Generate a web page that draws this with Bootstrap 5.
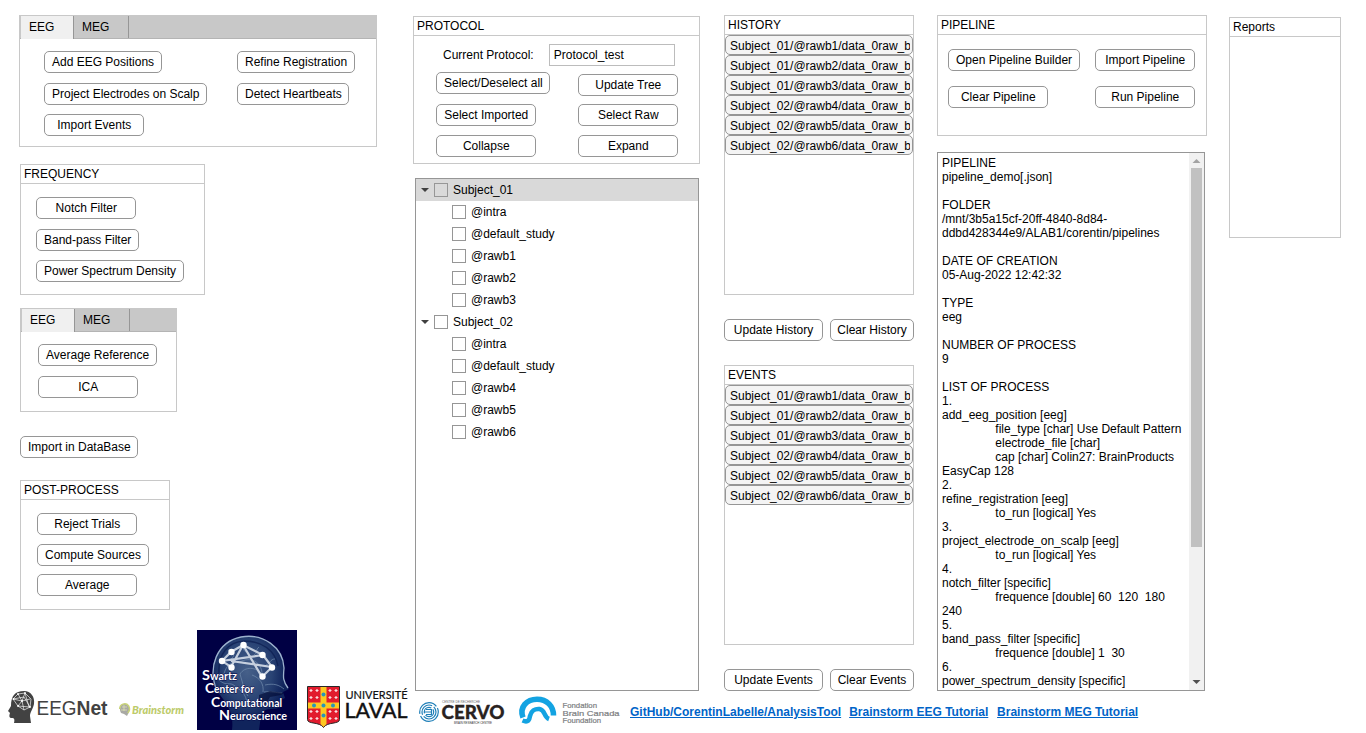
<!DOCTYPE html>
<html lang="en">
<head>
<meta charset="utf-8">
<title>EEGNet Analysis Tool</title>
<link rel="stylesheet" href="https://cdn.jsdelivr.net/npm/bootstrap@5.3.0/dist/css/bootstrap.min.css">
<script src="https://cdn.jsdelivr.net/npm/bootstrap@5.3.0/dist/js/bootstrap.bundle.min.js"></script>
<style>
body{font-family:"Liberation Sans",Arial,sans-serif;font-size:12px;line-height:14px;color:#000;background:#fff;width:1366px;height:733px;overflow:hidden}
.left-side{width:413px;padding:15px 0 0 20px}
.right-side{width:953px}
.columns-area{height:691px}
.panel{border:1px solid #c8c8c8;background:#fff}
.panel-title{height:19px;line-height:19px;padding-left:3px;border-bottom:1px solid #c8c8c8}
.btn-tool{--bs-btn-padding-x:7px;--bs-btn-padding-y:0;--bs-btn-font-size:12px;--bs-btn-line-height:20px;--bs-btn-color:#000;--bs-btn-bg:#fff;--bs-btn-border-color:#969696;--bs-btn-border-radius:5px;--bs-btn-hover-bg:#f0f0f0;--bs-btn-hover-color:#000;--bs-btn-hover-border-color:#777;padding-right:6.500px;min-width:100px;height:22px;white-space:nowrap}
.tab-strip{--bs-nav-link-padding-x:8px;--bs-nav-link-padding-y:0;--bs-nav-link-font-weight:400;background:#c8c8c8;border-bottom:1px solid #b4b4b4;height:23px;padding-left:1px}
.tab-strip .nav-link{height:22px;line-height:22px;color:#000;font-size:12px;border:0;border-right:1px solid #969696;border-radius:0;background:none}
.tab-strip .nav-link.active{background:#f0f0f0;height:23px;width:53px}
.tab-strip .nav-link:not(.active){width:55px}
.pre-panel{width:358px;height:132px;margin-left:-1px}
.pre-grid{display:grid;grid-template-columns:193px auto;grid-template-rows:22px 22px 22px;row-gap:10px;padding:12px 0 0 24px;justify-items:start;justify-content:start}
.pre-grid .third{margin-top:-1px}
.freq-panel{width:185px;height:131px;margin-top:17px}
.freq-list{padding:13px 0 0 15px}
.ref-panel{width:157px;height:104px;margin-top:13px}
.ref-list{padding:12px 0 0 17px;gap:10px}
.import-btn{margin-top:24px}
.post-panel{width:150px;height:130px;margin-top:22px}
.post-list{padding:13px 0 0 16px}
.gap-8{margin-top:8px}
.gap-9{margin-top:9px}
.gap-10{margin-top:10px}
.drop-2{margin-top:2px}
.logos-left{margin:20px 0 0 -20px;height:103px}
.protocol-col{width:287px;padding-top:16px}
.protocol-panel{height:148px}
.protocol-row{padding:8px 0 0 29px}
.protocol-row .form-control{width:126px;height:22px;margin-left:15px;border:1px solid #bcbcbc;border-radius:0;padding:0 4px;font-size:12px;line-height:20px;color:#000}
.protocol-grid{display:grid;grid-template-columns:142px auto;justify-content:start;justify-items:start;padding:6px 0 0 22px}
.tree-box{border:1px solid #969696;width:284px;height:513px;margin:14px 0 0 2px}
.tree-row{height:22px;padding-left:5px}
.tree-row.chosen{background:#d9d9d9}
.tree-row.leaf{padding-left:36px}
.tree-row .form-check-input{width:14px;height:14px;margin:0 5px 0 5px;border:1px solid #969696;border-radius:0;background-color:transparent}
.tree-row.leaf .form-check-input{margin-left:0}
.history-col{width:190px;margin-left:24px;padding-top:15px}
.list-panel{height:280px}
.entry{height:20px;line-height:20px;padding:0 2px 0 4px;border:1px solid #969696;border-radius:5px;background:#f4f4f4;overflow:hidden;white-space:nowrap}
.entry span{display:block;overflow:hidden}
.pair{display:grid;grid-template-columns:99px 84px;gap:7px;margin-top:24px}
.pair .btn-tool{min-width:0;padding:0}
.events-panel{margin-top:24px}
.pipeline-col{width:270px;margin-left:23px;padding-top:15px}
.pipeline-panel{height:121px}
.pipeline-grid{display:grid;grid-template-columns:147px auto;row-gap:15px;justify-content:start;justify-items:start;padding:14px 0 0 10px}
.summary-box{border:1px solid #969696;width:268px;height:539px;margin-top:16px}
.summary-text{width:251px;padding:3px 0 0 4px;margin:0;font:12px/14px "Liberation Sans",Arial,sans-serif;tab-size:16;overflow:hidden}
.scroll-track{width:15px;background:#f1f1f1}
.scroll-thumb{width:11px;height:379px;background:#c1c1c1}
.reports-panel{width:112px;height:221px;margin:17px 0 0 22px}
.footer-links{height:42px}
.footer-links a{color:#0064c8;font-weight:700;line-height:14px;margin-right:8px;margin-top:14px}
.footer-links a:last-child{margin-left:.8px}
</style>
</head>
<body>
<div class="d-flex">
  <section class="left-side d-flex flex-column align-items-start flex-shrink-0">
    <div class="panel pre-panel">
      <nav class="nav tab-strip"><a class="nav-link active" href="#">EEG</a><a class="nav-link" href="#">MEG</a></nav>
      <div class="pre-grid">
        <button class="btn btn-tool">Add EEG Positions</button><button class="btn btn-tool">Refine Registration</button>
        <button class="btn btn-tool">Project Electrodes on Scalp</button><button class="btn btn-tool">Detect Heartbeats</button>
        <button class="btn btn-tool third">Import Events</button>
      </div>
    </div>
    <div class="panel freq-panel">
      <div class="panel-title">FREQUENCY</div>
      <div class="freq-list d-flex flex-column align-items-start">
        <button class="btn btn-tool">Notch Filter</button>
        <button class="btn btn-tool gap-10">Band-pass Filter</button>
        <button class="btn btn-tool gap-9">Power Spectrum Density</button>
      </div>
    </div>
    <div class="panel ref-panel">
      <nav class="nav tab-strip"><a class="nav-link active" href="#">EEG</a><a class="nav-link" href="#">MEG</a></nav>
      <div class="ref-list d-flex flex-column align-items-start">
        <button class="btn btn-tool">Average Reference</button>
        <button class="btn btn-tool">ICA</button>
      </div>
    </div>
    <button class="btn btn-tool import-btn">Import in DataBase</button>
    <div class="panel post-panel">
      <div class="panel-title">POST-PROCESS</div>
      <div class="post-list d-flex flex-column align-items-start">
        <button class="btn btn-tool">Reject Trials</button>
        <button class="btn btn-tool gap-9">Compute Sources</button>
        <button class="btn btn-tool gap-8">Average</button>
      </div>
    </div>
    <div class="logos-left d-flex flex-shrink-0">
      <!-- EEGNet -->
      <svg width="116" height="103" viewBox="0 630 116 103">
        <path d="M14 723c1-4 0-5-2-5-3 0-3-2-2-5l-2-2 3-5c0-10 4-15 13-15 7 0 11 6 10 13-1 5-4 8-4 12l1 7z" fill="#424242"/>
        <path d="M13 699l5-5 7-1 6 6-1 8-6 3-6-4-5-7 9 2 8-2M18 694l4 7 3-8 4 14M22 701l-4 5M22 701l2 9M13 699l11-2 6 10M18 706l12 1" fill="none" stroke="#fff" stroke-width=".65"/>
        <g fill="#fff"><circle cx="18" cy="694" r=".9"/><circle cx="25" cy="693" r=".9"/><circle cx="22" cy="701" r="1"/><circle cx="30" cy="707" r=".9"/><circle cx="18" cy="706" r=".9"/><circle cx="13.500" cy="699" r=".9"/></g>
        <text x="36.500" y="715" font-size="20" fill="#424242" textLength="40" lengthAdjust="spacingAndGlyphs">EEG</text>
        <text x="76.500" y="715" font-size="20" font-weight="700" fill="#424242" textLength="31" lengthAdjust="spacingAndGlyphs">Net</text>
      </svg>
      <!-- Brainstorm -->
      <svg width="81" height="103" viewBox="116 630 81 103">
        <path d="M121 713c-3-6 1-10 5-9 4 1 4 5 3 8l-2 4-3-2z" fill="#a9a9a4"/>
        <path d="M119.700 709c0-5 6-7 9-3 1 2 1 5-1 7" fill="none" stroke="#c8d377" stroke-width="1.500"/>
        <path d="M122 707h5M121 710h6M124 705v6" stroke="#dde2b2" stroke-width=".8"/>
        <text x="132" y="714" font-family="Lato" font-weight="900" font-style="italic" font-size="10.500" fill="#bdcb6a" textLength="52" lengthAdjust="spacingAndGlyphs">Brainstorm</text>
      </svg>
      <!-- Swartz Center for Computational Neuroscience -->
      <svg width="100" height="100" viewBox="0 0 100 100">
        <defs><radialGradient id="brain" cx=".45" cy=".38"><stop stop-color="#466089"/><stop offset=".65" stop-color="#294374"/><stop offset="1" stop-color="#10245c"/></radialGradient></defs>
        <path d="M0 0h100v100H0z" fill="#000044"/>
        <path d="M20 61C10 37 19 13 43 7c22-5 43 10 44 31-1 11 0 14 5 21l-6 3 2 6-4 2v7c-8 4-16-1-20 8l-2 15H35c2-17-4-25-15-39z" fill="url(#brain)"/>
        <path d="M20 61C10 37 20 12 44 7c22-4 42 10 43 31-1 10-1 13 4 20" fill="none" stroke="#9cb2ce" stroke-width="1.300"/>
        <path d="M22 43c-1-19 9-31 25-32 18 0 31 9 34 25" fill="none" stroke="#0b1c50" stroke-width="1.500" opacity=".7"/>
        <path d="M27 44c2-9 8-13 16-12 10-6 22 0 22 12-6-7-17-8-22 0 3 10 4 16 8 22M31 20c7 2 7 6 3 9m10-15c4 4 1 6 5 8m13-5c-4 3-1 6-5 8m21 4c-5 0-5 5-9 6M22 50c8 7 10 1 16 6s11 7 12 18M55 45c8 3 12 9 11 17M68 55c9-2 14 0 19 4M67 62c8-1 12 1 18 1" fill="none" stroke="#7892b2" stroke-width="1" opacity=".65"/>
        <path d="M62 65l11-4 14 2-3 2-11 2-4 7-7-2z" fill="#000832" opacity=".6"/>
        <path d="M25 31l9-9 12-7 20 10 9 12-10 10-19-32-12 22-9-6 41-6 9 12-41-6" fill="none" stroke="#c5cfde" stroke-width="2.200"/>
        <g fill="#fff"><circle cx="25" cy="31" r="3.200"/><circle cx="34.500" cy="22" r="3.200"/><circle cx="46.500" cy="15" r="3.200"/><circle cx="34.500" cy="37.500" r="3.200"/><circle cx="65.500" cy="25" r="3.200"/><circle cx="75" cy="37.500" r="3.200"/><circle cx="65.500" cy="46.500" r="3.200"/></g>
        <g fill="#fff" font-family="Lato" font-weight="700" font-size="10.500" stroke="#000044" stroke-width=".8" paint-order="stroke">
          <text x="5" y="49.500" textLength="35" lengthAdjust="spacingAndGlyphs"><tspan font-size="14">S</tspan>wartz</text>
          <text x="8" y="63" textLength="49" lengthAdjust="spacingAndGlyphs"><tspan font-size="14">C</tspan>enter for</text>
          <text x="14" y="76.500" textLength="71" lengthAdjust="spacingAndGlyphs"><tspan font-size="14">C</tspan>omputational</text>
          <text x="22" y="89.500" textLength="68" lengthAdjust="spacingAndGlyphs"><tspan font-size="14">N</tspan>euroscience</text>
        </g>
      </svg>
      <!-- Université Laval -->
      <svg width="116" height="103" viewBox="297 630 116 103">
        <path d="M307.500 686.500h32v33c0 5-12 2-16 8-4-6-16-3-16-8z" fill="#e21b2d" stroke="#272727"/>
        <path d="M320.500 687h6v37l-3 3-3-3zM308 702.500h31v6h-31z" fill="#fcc822"/>
        <g fill="#2795bb"><circle cx="323.500" cy="694.500" r="2"/><circle cx="323.500" cy="705.500" r="2"/><circle cx="314" cy="705.500" r="2"/><circle cx="333" cy="705.500" r="2"/><circle cx="323.500" cy="715.500" r="2"/></g>
        <path d="M309.500 690.500h3m3 0h3m10 0h3m3 0h3M309.500 697.500h3m3 0h3m10 0h3m3 0h3M309.500 711.500h3m3 0h3m10 0h3m3 0h3M309.500 718.500h3m3 0h3m10 0h3m3 0h3M311 689v3m6-3v3m13-3v3m6-3v3M311 696v3m6-3v3m13-3v3m6-3v3M311 710v3m6-3v3m13-3v3m6-3v3M311 717v3m6-3v3m13-3v3m6-3v3" fill="none" stroke="#fff" stroke-width="1.200" opacity=".85"/>
        <text x="345.500" y="699.300" font-family="Lato" font-size="10.800" fill="#111" stroke="#111" stroke-width=".2" textLength="62" lengthAdjust="spacingAndGlyphs">UNIVERSITÉ</text>
        <text x="344.500" y="718.300" font-family="Lato" font-size="21.500" fill="#111" stroke="#111" stroke-width=".45" textLength="63" lengthAdjust="spacingAndGlyphs">LAVAL</text>
      </svg>
    </div>
  </section>

  <section class="right-side flex-shrink-0">
    <div class="columns-area d-flex align-items-start">
      <div class="protocol-col">
        <div class="panel protocol-panel">
          <div class="panel-title">PROTOCOL</div>
          <div class="protocol-row d-flex align-items-center"><label for="proto">Current Protocol:</label><input id="proto" class="form-control" value="Protocol_test"></div>
          <div class="protocol-grid">
            <button class="btn btn-tool">Select/Deselect all</button><button class="btn btn-tool drop-2">Update Tree</button>
            <button class="btn btn-tool gap-8">Select Imported</button><button class="btn btn-tool gap-8">Select Raw</button>
            <button class="btn btn-tool gap-9">Collapse</button><button class="btn btn-tool gap-9">Expand</button>
          </div>
        </div>
        <div class="tree-box">
          <div class="tree-row chosen d-flex align-items-center"><svg width="8" height="4"><path d="M0 0h8L4 4z" fill="#404040"/></svg><input class="form-check-input" type="checkbox">Subject_01</div>
          <div class="tree-row leaf d-flex align-items-center"><input class="form-check-input" type="checkbox">@intra</div>
          <div class="tree-row leaf d-flex align-items-center"><input class="form-check-input" type="checkbox">@default_study</div>
          <div class="tree-row leaf d-flex align-items-center"><input class="form-check-input" type="checkbox">@rawb1</div>
          <div class="tree-row leaf d-flex align-items-center"><input class="form-check-input" type="checkbox">@rawb2</div>
          <div class="tree-row leaf d-flex align-items-center"><input class="form-check-input" type="checkbox">@rawb3</div>
          <div class="tree-row d-flex align-items-center"><svg width="8" height="4"><path d="M0 0h8L4 4z" fill="#404040"/></svg><input class="form-check-input" type="checkbox">Subject_02</div>
          <div class="tree-row leaf d-flex align-items-center"><input class="form-check-input" type="checkbox">@intra</div>
          <div class="tree-row leaf d-flex align-items-center"><input class="form-check-input" type="checkbox">@default_study</div>
          <div class="tree-row leaf d-flex align-items-center"><input class="form-check-input" type="checkbox">@rawb4</div>
          <div class="tree-row leaf d-flex align-items-center"><input class="form-check-input" type="checkbox">@rawb5</div>
          <div class="tree-row leaf d-flex align-items-center"><input class="form-check-input" type="checkbox">@rawb6</div>
        </div>
      </div>

      <div class="history-col">
        <div class="panel list-panel">
          <div class="panel-title">HISTORY</div>
          <div class="entry"><span>Subject_01/@rawb1/data_0raw_b</span></div>
          <div class="entry"><span>Subject_01/@rawb2/data_0raw_b</span></div>
          <div class="entry"><span>Subject_01/@rawb3/data_0raw_b</span></div>
          <div class="entry"><span>Subject_02/@rawb4/data_0raw_b</span></div>
          <div class="entry"><span>Subject_02/@rawb5/data_0raw_b</span></div>
          <div class="entry"><span>Subject_02/@rawb6/data_0raw_b</span></div>
        </div>
        <div class="pair"><button class="btn btn-tool">Update History</button><button class="btn btn-tool">Clear History</button></div>
        <div class="panel list-panel events-panel">
          <div class="panel-title">EVENTS</div>
          <div class="entry"><span>Subject_01/@rawb1/data_0raw_b</span></div>
          <div class="entry"><span>Subject_01/@rawb2/data_0raw_b</span></div>
          <div class="entry"><span>Subject_01/@rawb3/data_0raw_b</span></div>
          <div class="entry"><span>Subject_02/@rawb4/data_0raw_b</span></div>
          <div class="entry"><span>Subject_02/@rawb5/data_0raw_b</span></div>
          <div class="entry"><span>Subject_02/@rawb6/data_0raw_b</span></div>
        </div>
        <div class="pair"><button class="btn btn-tool">Update Events</button><button class="btn btn-tool">Clear Events</button></div>
      </div>

      <div class="pipeline-col">
        <div class="panel pipeline-panel">
          <div class="panel-title">PIPELINE</div>
          <div class="pipeline-grid">
            <button class="btn btn-tool">Open Pipeline Builder</button><button class="btn btn-tool">Import Pipeline</button>
            <button class="btn btn-tool">Clear Pipeline</button><button class="btn btn-tool">Run Pipeline</button>
          </div>
        </div>
        <div class="summary-box d-flex">
<pre class="summary-text">PIPELINE
pipeline_demo[.json]

FOLDER
/mnt/3b5a15cf-20ff-4840-8d84-
ddbd428344e9/ALAB1/corentin/pipelines

DATE OF CREATION
05-Aug-2022 12:42:32

TYPE
eeg

NUMBER OF PROCESS
9

LIST OF PROCESS
1.
add_eeg_position [eeg]
&#9;file_type [char] Use Default Pattern
&#9;electrode_file [char]
&#9;cap [char] Colin27: BrainProducts
EasyCap 128
2.
refine_registration [eeg]
&#9;to_run [logical] Yes
3.
project_electrode_on_scalp [eeg]
&#9;to_run [logical] Yes
4.
notch_filter [specific]
&#9;frequence [double] 60  120  180
240
5.
band_pass_filter [specific]
&#9;frequence [double] 1  30
6.
power_spectrum_density [specific]</pre>
          <div class="scroll-track d-flex flex-column align-items-center">
            <svg width="15" height="15"><path d="M3.500 10h8L7.500 6z" fill="#a3a3a3"/></svg>
            <div class="scroll-thumb"></div>
            <svg class="mt-auto" width="15" height="15"><path d="M3.500 5h8L7.500 9z" fill="#505050"/></svg>
          </div>
        </div>
      </div>

      <div class="panel reports-panel"><div class="panel-title">Reports</div></div>
    </div>

    <footer class="footer-links d-flex align-items-start">
      <!-- CERVO and Fondation Brain Canada -->
      <svg class="flex-shrink-0" width="217" height="42" viewBox="413 691 217 42">
        <g fill="none" stroke="#1f7fb8" stroke-width="1.200"><circle cx="429" cy="712" r="9.300" stroke-dasharray="25 2"/><circle cx="429" cy="712" r="7" stroke-dasharray="17 2"/><circle cx="429" cy="712" r="4.700" stroke-dasharray="11 2"/><path d="M424 712h8m-6-2.500h5.500v5H426"/></g>
        <text x="442" y="703" font-size="3.200" fill="#666" textLength="38" lengthAdjust="spacingAndGlyphs">CENTRE DE RECHERCHE</text>
        <text x="441.500" y="718.800" font-family="Lato" font-size="19.500" font-weight="900" fill="#29231f" stroke="#29231f" stroke-width=".3" textLength="63" lengthAdjust="spacingAndGlyphs">CERVO</text>
        <text x="454" y="723.500" font-size="3.200" fill="#333" textLength="38" lengthAdjust="spacingAndGlyphs">BRAIN RESEARCH CENTRE</text>
        <path d="M523 717.500C519 707 527 699.200 537 699.200c10 0 16.500 7 16.500 16.300" fill="none" stroke="#13a3e2" stroke-width="5.600"/>
        <path d="M522.500 720.500c6 2.500 7-1 7.500-4.500 1-5 5-7.500 9.500-7 6 1 4 8 9.500 10" fill="none" stroke="#13a3e2" stroke-width="4.600"/>
        <g fill="#7b7d80" font-size="8" stroke="#7b7d80" stroke-width=".2"><text x="562.500" y="708" textLength="34.500" lengthAdjust="spacingAndGlyphs">Fondation</text><text x="562.500" y="716" textLength="57" lengthAdjust="spacingAndGlyphs">Brain Canada</text><text x="562.500" y="723.300" textLength="38.500" lengthAdjust="spacingAndGlyphs">Foundation</text></g>
      </svg>
      <a href="#">GitHub/CorentinLabelle/AnalysisTool</a>
      <a href="#">Brainstorm EEG Tutorial</a>
      <a href="#">Brainstorm MEG Tutorial</a>
    </footer>
  </section>
</div>
</body>
</html>
